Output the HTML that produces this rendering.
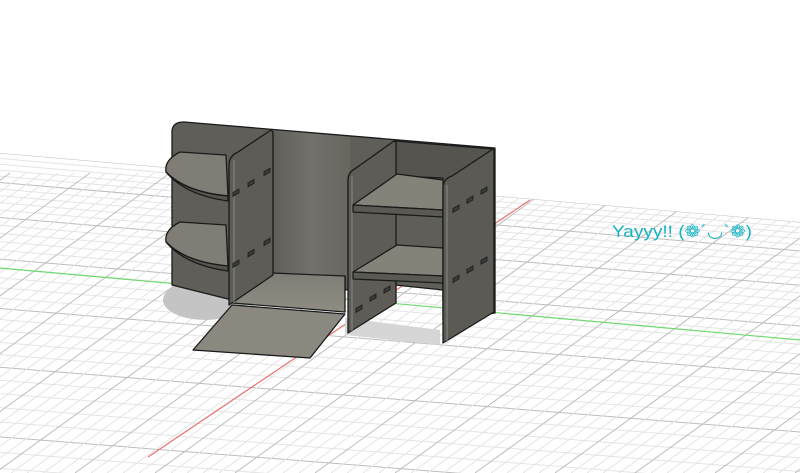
<!DOCTYPE html>
<html><head><meta charset="utf-8"><style>
html,body{margin:0;padding:0;background:#fff;width:800px;height:473px;overflow:hidden}
svg{display:block;overflow:hidden}
</style></head><body>
<svg id="s" width="800" height="473" viewBox="0 0 800 473" xmlns="http://www.w3.org/2000/svg">
<defs>
<linearGradient id="bw" x1="0" x2="1" y1="0" y2="0"><stop offset="0" stop-color="#5f5e59"/><stop offset="0.5" stop-color="#72716b"/><stop offset="1" stop-color="#67665f"/></linearGradient>
<linearGradient id="fl" x1="0" x2="0" y1="0" y2="1"><stop offset="0" stop-color="#7f7d75"/><stop offset="1" stop-color="#8f8c83"/></linearGradient>
</defs>
<g id="grid" stroke-width="1" fill="none"></g>
<line x1="0" y1="268" x2="800" y2="340" stroke="#6fd86f" stroke-width="1.2"/>
<line x1="530" y1="200" x2="148" y2="457" stroke="#e87070" stroke-width="1.2"/>
<ellipse cx="205" cy="300" rx="42" ry="20" fill="#c4c4c4"/>
<polygon points="345,318 440,330 440,345 345,335" fill="#d6d6d6"/>
<g stroke="#1a1a1a" stroke-width="1.3" stroke-linejoin="round">
<path d="M172,285 L172,132 Q172,122 184,122 L495,148 L495,313 L443,320 L443,290 L395,285 L345,290 L345,275 L272,273 L232,300 Z" fill="#5f5e59"/>
<polygon points="272,130 350,137 350,276 272,273" fill="url(#bw)" stroke="none"/>
<polygon points="395,141 493,149 493,310 443,300 443,178 395,176" fill="#55544f"/>
<path d="M226,155 L180,152 Q164,160 166,172 Q185,192 228,196 Z" fill="#7f7d75"/>
<path d="M166,172 Q185,195 228,201 L228,196 Q185,192 166,172 Z" fill="#55544f"/>
<path d="M226,225 L180,222 Q164,230 166,242 Q185,262 228,266 Z" fill="#7f7d75"/>
<path d="M166,242 Q185,265 228,271 L228,266 Q185,262 166,242 Z" fill="#55544f"/>
<polygon points="232,303 272,273 345,276 345,312" fill="url(#fl)"/>
<path d="M229,305 L229,165 Q229,156 238,152 L271,130 L273,132 L273,275 Z" fill="#5d5c57"/>
<line x1="234" y1="160" x2="234" y2="303" stroke="#8a8982" stroke-width="1"/>
<polygon points="193,350 232,305 345,314 310,358" fill="#8b8880"/>
<!-- middle divider -->
<path d="M348,333 L348,180 Q348,172 356,168 L394,141 L396,142 L396,303 Z" fill="#5d5c57"/>
<line x1="352" y1="176" x2="352" y2="332" stroke="#8a8982" stroke-width="1"/>
<!-- right inner shelves drawn over divider -->
<polygon points="353,205 397,174 443,180 443,210" fill="#858279"/>
<polygon points="353,205 443,210 443,217 353,212" fill="#5a5954"/>
<polygon points="353,272 397,245 443,248 443,276" fill="#858279"/>
<polygon points="353,272 443,276 443,283 353,279" fill="#5a5954"/>
<path d="M443,343 L443,188 Q443,179 452,176 L493,149 L494,150 L494,312 Z" fill="#5b5a55"/>
<line x1="447" y1="185" x2="447" y2="342" stroke="#8a8982" stroke-width="1"/>
</g>
<g fill="#3a3a36" stroke="#1a1a1a" stroke-width="0.8">
<rect x="233" y="189" width="6" height="4" transform="skewY(-30) translate(0,138)"/>
<rect x="248" y="180" width="6" height="4" transform="skewY(-30) translate(0,146)"/>
<rect x="264" y="170" width="6" height="4" transform="skewY(-30) translate(0,154)"/>
<rect x="233" y="260" width="6" height="4" transform="skewY(-30) translate(0,138)"/>
<rect x="248" y="250" width="6" height="4" transform="skewY(-30) translate(0,146)"/>
<rect x="264" y="240" width="6" height="4" transform="skewY(-30) translate(0,154)"/>
<rect x="356" y="306" width="6" height="4" transform="skewY(-30) translate(0,208)"/>
<rect x="370" y="296" width="6" height="4" transform="skewY(-30) translate(0,215)"/>
<rect x="384" y="287" width="6" height="4" transform="skewY(-30) translate(0,224)"/>
<rect x="453" y="208" width="6" height="4" transform="skewY(-30) translate(0,262)"/>
<rect x="467" y="199" width="6" height="4" transform="skewY(-30) translate(0,270)"/>
<rect x="481" y="190" width="6" height="4" transform="skewY(-30) translate(0,278)"/>
<rect x="453" y="278" width="6" height="4" transform="skewY(-30) translate(0,262)"/>
<rect x="467" y="269" width="6" height="4" transform="skewY(-30) translate(0,270)"/>
<rect x="481" y="260" width="6" height="4" transform="skewY(-30) translate(0,278)"/>
</g>
<text x="612" y="237" font-family="Liberation Sans, DejaVu Sans, sans-serif" font-size="17" fill="#19b3c4" textLength="140" lengthAdjust="spacingAndGlyphs">Yayyy!! (❁´◡`❁)</text>
</svg>
<script>
var g=document.getElementById('grid'),ns='http://www.w3.org/2000/svg';
function L(x1,y1,x2,y2,c){var l=document.createElementNS(ns,'line');l.setAttribute('x1',x1);l.setAttribute('y1',y1);l.setAttribute('x2',x2);l.setAttribute('y2',y2);l.setAttribute('stroke',c);g.appendChild(l);}
var y=153,sp=5.5,i=0;
while(y<473){L(0,y,800,y+69-(y-153)*0.02,i%5==0?'#bcbcbc':'#e4e4e4');y+=sp;sp*=1.035;i++;}
for(var k=-40;k<60;k++){var x0=530+k*16;L(x0+40,173,x0-375,473,k%5==0?'#bcbcbc':'#e4e4e4');}
var r=document.createElementNS(ns,'polygon');r.setAttribute('points','0,0 800,0 800,222 0,153');r.setAttribute('fill','#fff');g.appendChild(r);
</script>
</body></html>
